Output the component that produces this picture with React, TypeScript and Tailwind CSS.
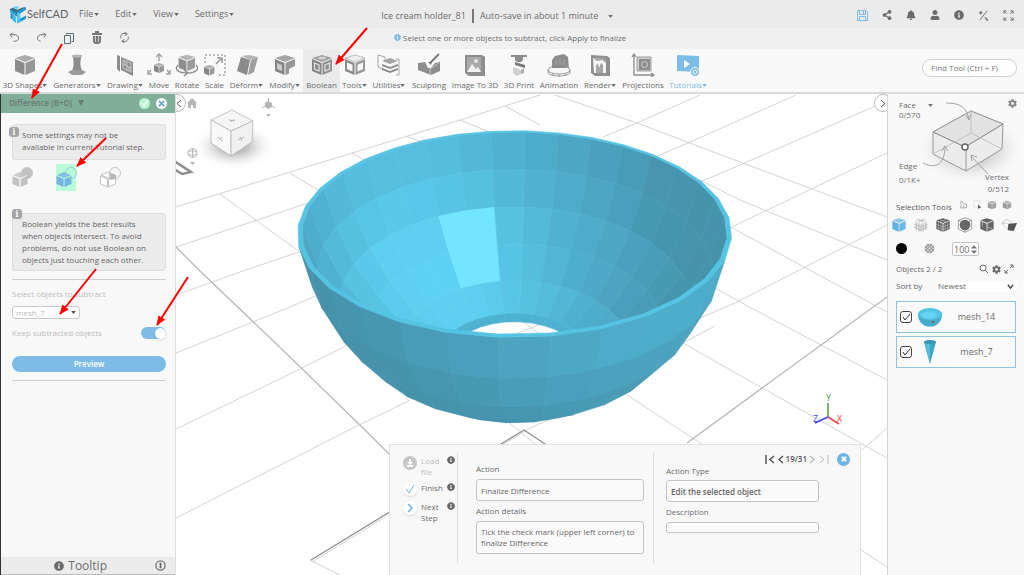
import type { ReactNode } from "react";
import { FaBell, FaCog, FaInfoCircle, FaShareAlt, FaUser } from "react-icons/fa";

type IconProps = { className?: string };

/* ---------- small shared pieces ---------- */

function Caret({ className = "" }: IconProps) {
  return (
    <svg viewBox="0 0 6 4" className={`w-[5px] h-[3px] shrink-0 ${className}`} fill="currentColor" aria-hidden="true">
      <path d="M0 0h6L3 4z" />
    </svg>
  );
}

function Svg({ children, className = "w-6 h-6", box = "0 0 24 24" }: { children: ReactNode; className?: string; box?: string }) {
  return (
    <svg viewBox={box} className={`shrink-0 ${className}`} fill="none" aria-hidden="true">
      {children}
    </svg>
  );
}

function InfoTag({ className = "" }: IconProps) {
  return (
    <span className={`flex h-[10px] w-[10px] items-center justify-center rounded-[3px] bg-[#a5a5a5] font-serif text-[9px] font-bold leading-none text-white ${className}`}>
      i
    </span>
  );
}

function Logo() {
  return (
    <Svg className="h-[19px] w-[19px]" box="0 0 36 36">
      <path d="M3 8l6-3 9 4 8-4 8-1-11 7-6 4v7l-5-3v-3z" fill="#37718c" />
      <path d="M3 8l12 7v6L5 15z" fill="#29a9e1" />
      <path d="M5 15l4 3v10l-4-3z" fill="#1d86b8" />
      <path d="M9 18l6 4v12l-6-4z" fill="#36c0ee" />
      <path d="M17 14l17-10v5l-11 7v10l11-6v6L17 35z" fill="#1896d3" />
      <path d="M17 14l6 2v13l-6 6z" fill="#4acbf6" />
      <path d="M14 2l8 2-6 4-7-3z" fill="#6fcdf0" />
    </Svg>
  );
}

/* ---------- toolbar icons ---------- */

const cubeTop = "M12 2l10 3-10 4L2 5z";
const cubeLeft = "M2 6l9.500 4v12L2 18z";
const cubeRight = "M12.500 10L22 6v12l-9.500 4z";

function CubeIcon({ className = "w-6 h-6" }: IconProps) {
  return (
    <Svg className={className}>
      <path d={cubeTop} fill="currentColor" opacity="0.7" />
      <path d={cubeLeft} fill="currentColor" />
      <path d={cubeRight} fill="currentColor" opacity="0.9" />
    </Svg>
  );
}

const toolIcons: Record<string, ReactNode> = {
  shapes: <CubeIcon className="h-6 w-6 text-[#8b8b8b]" />,
  generators: (
    <Svg>
      <path d="M7 2h10l-1 3c-1 5-1 8 1 13H7c2-5 2-8 1-13z" fill="#8d8d8d" />
      <ellipse cx="12" cy="3" rx="5" ry="1.500" fill="#b9b9b9" />
      <path d="M3 19l4-2h10l4 2-4 3H7z" fill="#9c9c9c" />
    </Svg>
  ),
  drawing: (
    <Svg>
      <path d="M4 2l3 1v16l-3-3zM8 4l12 5v14L8 17z" fill="#8d8d8d" />
      <path d="M10 7l8 3v9l-8-4zM10 11l8 4M14 9v9M12 8v4M16 14v4" stroke="#d5d5d5" strokeWidth="0.800" />
    </Svg>
  ),
  move: (
    <Svg>
      <g transform="translate(6 9) scale(.5)">
        <path d={cubeTop} fill="#b0b0b0" />
        <path d={cubeLeft} fill="#858585" />
        <path d={cubeRight} fill="#989898" />
      </g>
      <path d="M12 8V2M9 4l3-3 3 3M4 17l-3 4M1 17v4h4M20 17l3 4M23 17v4h-4" stroke="#a5a5a5" strokeWidth="1.500" />
    </Svg>
  ),
  rotate: (
    <Svg>
      <g transform="translate(2 0) scale(.82)">
        <path d={cubeTop} fill="#b5b5b5" />
        <path d={cubeLeft} fill="#8d8d8d" />
        <path d={cubeRight} fill="#9c9c9c" />
      </g>
      <path d="M3 12c-5 5 2 8 9 8 9 0 13-4 9-8M9 17l4 3-4 3" stroke="#8d8d8d" strokeWidth="1.300" />
    </Svg>
  ),
  scale: (
    <Svg>
      <path d="M2 10V2h20v20h-8" stroke="#a5a5a5" strokeWidth="1.500" strokeDasharray="2 2" />
      <g transform="translate(0 11) scale(.52)">
        <path d={cubeTop} fill="#b0b0b0" />
        <path d={cubeLeft} fill="#858585" />
        <path d={cubeRight} fill="#999" />
      </g>
      <path d="M13 11l5-5M14 5h5v5" stroke="#999" strokeWidth="1.500" />
    </Svg>
  ),
  deform: (
    <Svg>
      <path d="M7 3l7-1 9 2-8 3z" fill="#b5b5b5" />
      <path d="M6 4l9 3-3 15-10-4z" fill="#8b8b8b" />
      <path d="M16 7l7-3-4 15-6 3z" fill="#9e9e9e" />
    </Svg>
  ),
  modify: (
    <Svg>
      <path d={cubeTop} fill="#a5a5a5" />
      <path d={cubeLeft} fill="#858585" />
      <path d={cubeRight} fill="#979797" />
      <path d="M4 10l5 2v6l-5-2z" fill="#c9c9c9" />
      <path d="M16 16l6-3v6l-6 3z" fill="#f9f9f9" />
    </Svg>
  ),
  boolean: (
    <Svg>
      <path d={cubeTop} fill="#a0a0a0" />
      <path d={cubeLeft} fill="#858585" />
      <path d={cubeRight} fill="#909090" />
      <ellipse cx="12" cy="5" rx="4" ry="1.300" fill="#d5d5d5" />
      <path d="M4.500 10l4.500 2v6l-4.500-2zM15 12l4.500-2v6L15 18z" stroke="#dedede" strokeWidth="1.300" />
    </Svg>
  ),
  tools: (
    <Svg>
      <path d={cubeTop} fill="#efefef" stroke="#bdbdbd" />
      <path d={cubeLeft} fill="#8b8b8b" />
      <path d={cubeRight} fill="#999" />
      <path d="M4 9.500l5.500 2.300v6.700L4 16zM14.500 11.800L20 9.500V16l-5.500 2.500z" fill="#fafafa" />
    </Svg>
  ),
  utilities: (
    <Svg>
      <path d="M1 2l7 2v3M1 2v12l5 2M19 6h3v16h-3" stroke="#a5a5a5" />
      <path d="M13 5l8 3-8 3-8-3z" fill="#a5a5a5" />
      <path d="M5 11l8 3 8-3v2l-8 3-8-3zM5 15l8 3 8-3v2l-8 3-8-3z" fill="#8b8b8b" />
    </Svg>
  ),
  sculpting: (
    <Svg>
      <path d="M1 10l7-1 3 6h3l4-5 5-1v9l-9 4-13-5z" fill="#8d8d8d" />
      <path d="M11 9l3 3 1-3z" fill="#777" />
      <path d="M13 10L22 1" stroke="#777" strokeWidth="1.800" />
      <path d="M13 22v-6l9-6" stroke="#cfcfcf" strokeWidth="0.800" />
    </Svg>
  ),
  image: (
    <Svg>
      <path d="M2 2h17l3 2v19H6l-4-3z" fill="#8d8d8d" />
      <path d="M4 4h14v15H4z" fill="#aaa" />
      <path d="M4 19l5-8 4 5 2-2 3 5z" fill="#f2f2f2" />
      <circle cx="13" cy="8" r="2" fill="#e5e5e5" />
    </Svg>
  ),
  print: (
    <Svg>
      <path d="M4 2h16v2H4zM8 4h8v3l-2 2h-4L8 7z" fill="#8d8d8d" />
      <path d="M8 9l10 3v3L8 12z" fill="#777" />
      <path d="M6 14l8 3v4l-4 2-4-3z" fill="#d0d0d0" />
      <path d="M14 17l3-2v5l-3 1z" fill="#b0b0b0" />
    </Svg>
  ),
  animation: (
    <Svg>
      <path d="M5 16V7l3-4 9-2 4 3 1 12z" fill="#8d8d8d" />
      <path d="M9 13V7M13 14V6M17 13V7" stroke="#aaa" />
      <ellipse cx="12" cy="17" rx="11" ry="4" fill="#f7f7f7" stroke="#999" />
      <path d="M5 15h14v-3H5z" fill="#8d8d8d" />
      <path d="M1 17v3c3 4 19 4 22 0v-3M6 20v3M12 21v3M18 20v3" stroke="#999" />
    </Svg>
  ),
  render: (
    <Svg>
      <path d="M3 2l16 1 3 2v18H7l-4-3z" fill="#909090" />
      <path d="M5 5l13 1v14H6z" fill="#f4f4f4" />
      <path d="M8 20v-8l2-1 1 4 2-5 2 2v8M5 5l4 3 5-1 4 3V6z" fill="#a5a5a5" />
    </Svg>
  ),
  projections: (
    <Svg>
      <path d="M3 2v20h19M1 4l2-3 2 3M20 20l3 2-3 2" stroke="#8d8d8d" strokeWidth="1.300" />
      <path d="M6 4h14v14H6z" fill="#cfcfcf" stroke="#9c9c9c" />
      <path d="M8 6h11v11H8z" fill="#8d8d8d" />
      <circle cx="13.500" cy="11.500" r="3" stroke="#d5d5d5" />
    </Svg>
  ),
  tutorials: (
    <Svg>
      <path d="M1 2l22 1v16l-22-1z" fill="#7dbce6" />
      <path d="M8 7l6 4-6 4z" fill="#fff" />
      <circle cx="19" cy="19" r="4.500" fill="#7dbce6" stroke="#f9f9f9" />
      <circle cx="19" cy="19" r="2" stroke="#f9f9f9" />
    </Svg>
  ),
};

const tools = [
  { label: "3D Shapes", icon: "shapes", width: "w-[50px]", menu: true },
  { label: "Generators", icon: "generators", width: "w-[54px]", menu: true },
  { label: "Drawing", icon: "drawing", width: "w-[42px]", menu: true },
  { label: "Move", icon: "move", width: "w-[26px]" },
  { label: "Rotate", icon: "rotate", width: "w-[30px]" },
  { label: "Scale", icon: "scale", width: "w-[25px]" },
  { label: "Deform", icon: "deform", width: "w-[39px]", menu: true },
  { label: "Modify", icon: "modify", width: "w-[37px]", menu: true },
  { label: "Boolean", icon: "boolean", width: "w-[37px] bg-[#ebebeb]" },
  { label: "Tools", icon: "tools", width: "w-[29px]", menu: true },
  { label: "Utilities", icon: "utilities", width: "w-[40px]", menu: true },
  { label: "Sculpting", icon: "sculpting", width: "w-[40px]" },
  { label: "Image To 3D", icon: "image", width: "w-[52px]" },
  { label: "3D Print", icon: "print", width: "w-[36px]" },
  { label: "Animation", icon: "animation", width: "w-[44px]" },
  { label: "Render", icon: "render", width: "w-[38px]", menu: true },
  { label: "Projections", icon: "projections", width: "w-[48px]" },
  { label: "Tutorials", icon: "tutorials", width: "w-[42px] text-[#7dbce6]", menu: true },
];

/* ---------- header ---------- */

function MenuBar() {
  return (
    <header className="flex h-7 shrink-0 items-center bg-[#ebebeb] pl-2 pr-[10px] text-[9px]">
      <a href="#home" className="flex w-[71px] items-center text-[11px] text-[#5f6468]">
        <Logo />
        <span className="font-['Lato',sans-serif]">SelfCAD</span>
      </a>
      <nav className="flex gap-4">
        {["File", "Edit", "View", "Settings"].map((item) => (
          <button key={item} type="button" className="flex items-center gap-px">
            {item}
            <Caret />
          </button>
        ))}
      </nav>
      <div className="ml-[147px] flex items-center pt-1">
        <span>Ice cream holder_81</span>
        <span className="mx-[6px] h-[14px] w-[2px] bg-[#777]" />
        <button type="button" className="flex items-center gap-[10px]">
          Auto-save in about 1 minute
          <Caret />
        </button>
      </div>
      <div className="ml-auto flex items-center gap-[14px] pt-[2px] text-[10px]">
        <button type="button" aria-label="Save" className="text-[#7dbce6]">
          <Svg className="h-[11px] w-[11px]" box="0 0 11 11">
            <path d="M0.500 0.500h9l1 1v9h-10zM2.500 0.500v4h6v-4M2.500 10.500v-4h6v4" stroke="currentColor" />
            <path d="M6 1h1v3H6z" fill="currentColor" />
          </Svg>
        </button>
        <button type="button" aria-label="Share"><FaShareAlt /></button>
        <button type="button" aria-label="Notifications"><FaBell /></button>
        <button type="button" aria-label="Account"><FaUser /></button>
        <button type="button" aria-label="Info"><FaInfoCircle /></button>
        <button type="button" aria-label="Units">
          <Svg className="h-[11px] w-[11px]" box="0 0 12 12">
            <path d="M2 11l8-10M1 3h4M3 1v4" stroke="currentColor" />
            <circle cx="3" cy="3" r="1" fill="currentColor" />
            <path d="M7 8l4 3M9 8v3h2" stroke="currentColor" />
          </Svg>
        </button>
        <button type="button" aria-label="Full screen">
          <Svg className="h-[11px] w-[11px]" box="0 0 12 12">
            <path d="M1 4V1h3M8 1h3v3M11 8v3H8M4 11H1V8M1 1l3 3M11 1L8 4M11 11L8 8M1 11l3-3" stroke="currentColor" />
          </Svg>
        </button>
      </div>
    </header>
  );
}

function ActionBar() {
  return (
    <div className="flex h-[21px] shrink-0 items-center bg-[#f0f0f0] pl-[9px] pb-[2px] text-[8px]">
      <div className="flex w-[385px] items-center gap-4">
        <button type="button" aria-label="Undo">
          <Svg className="h-[11px] w-[11px]" box="0 0 12 12"><path d="M4 1L1 3l3 3M2 3h5c5 1 4 7 0 7H5" stroke="currentColor" /></Svg>
        </button>
        <button type="button" aria-label="Redo">
          <Svg className="h-[11px] w-[11px]" box="0 0 12 12"><path d="M8 1l3 2-3 3M10 3H5C0 4 1 10 5 10" stroke="currentColor" /></Svg>
        </button>
        <button type="button" aria-label="Copy">
          <Svg className="h-3 w-3" box="0 0 12 12"><path d="M3.500 2.500v-1h7v8h-2M1.500 3.500h6v8h-6z" stroke="#5a6c76" /></Svg>
        </button>
        <button type="button" aria-label="Delete">
          <Svg className="h-[13px] w-3" box="0 0 12 13">
            <path d="M1 2h10v2H1zM4 0h4v2H4zM2 5h8v6l-2 2H4l-2-2z" fill="#777" />
            <path d="M4.500 5v6M7.500 5v6" stroke="#ccc" />
          </Svg>
        </button>
        <button type="button" aria-label="Reset">
          <Svg className="h-[11px] w-[11px]" box="0 0 12 12"><path d="M8 2C4 0 1 4 2 7M4 10c4 2 7-2 6-5M6 0l3 2-3 2M6 12l-3-2 3-2" stroke="currentColor" /></Svg>
        </button>
      </div>
      <p className="flex items-center gap-[2px]">
        <FaInfoCircle className="text-[7px] text-[#7dbce6]" />
        Select one or more objects to subtract, click Apply to finalize
      </p>
    </div>
  );
}

function Toolbar() {
  return (
    <div className="flex h-[45px] shrink-0 items-center border-b-2 border-[#dadada] bg-[#f9f9f9]">
      <div className="flex h-full">
        {tools.map((tool) => (
          <button key={tool.label} type="button" className={`flex shrink-0 flex-col items-center pt-1 text-[8px] ${tool.width}`}>
            {toolIcons[tool.icon]}
            <span className="flex items-center whitespace-nowrap leading-4">
              {tool.label}
              {tool.menu && <Caret />}
            </span>
          </button>
        ))}
      </div>
      <input
        type="search"
        aria-label="Find Tool"
        placeholder="Find Tool (Ctrl + F)"
        className="ml-auto mr-[7px] mt-[-6px] h-[18px] w-[95px] rounded-full border border-[#cfcfcf] bg-white px-2 text-[8px] outline-none placeholder:text-[#777]"
      />
    </div>
  );
}

/* ---------- left panel ---------- */

function BooleanIcon({ mode }: { mode: "union" | "difference" | "intersection" }) {
  const tone = mode === "difference" ? "#74b4e6" : "#c2c2c2";
  const hollow = mode === "intersection";
  return (
    <Svg className="h-[21px] w-[21px]" box="0 0 21 21">
      {mode === "union" && <circle cx="15" cy="6" r="5.500" fill="#c2c2c2" />}
      <path d="M1 8l7-3 7 3-7 3z" fill={hollow ? "#f8f8f8" : tone} stroke={hollow ? tone : "none"} opacity="0.85" />
      <path d="M0.500 9l7 3v8l-7-3z" fill={hollow ? "#fff" : tone} stroke={hollow ? tone : "none"} />
      <path d="M8.500 12l7-3v8l-7 3z" fill={hollow ? "#fff" : tone} stroke={hollow ? tone : "none"} />
      {hollow && <path d="M9 6l7 2v4l-6 1z" fill="#b5b5b5" />}
      <circle cx="15" cy="6" r="5.500" stroke={mode === "difference" ? "#93cbd0" : "#c2c2c2"} />
      {mode === "union" && <path d="M0.500 8.500l7.500 3 7-3M8 12v8" stroke="#f2f2f2" />}
    </Svg>
  );
}

function LeftPanel() {
  return (
    <aside className="flex w-[176px] shrink-0 flex-col border-l border-r border-l-[#333] border-r-[#ddd] bg-[#f8f8f8] text-[8px]">
      <div className="flex h-[19px] items-center bg-[#80ae98] pb-px pl-2 pr-2 text-[#6a7c73]">
        <button type="button" className="flex items-center gap-[6px] font-semibold">
          Difference (B+D)
          <svg viewBox="0 0 6 6" className="h-[6px] w-[6px]" fill="currentColor" aria-hidden="true"><path d="M0 0h6L3 6z" /></svg>
        </button>
        <button type="button" aria-label="Apply" className="ml-auto flex h-[11px] w-[11px] items-center justify-center rounded-full bg-[#b4f5cf]">
          <Svg className="h-2 w-2" box="0 0 8 8"><path d="M1 4l2 3 4-6" stroke="#fff" strokeWidth="1.500" /></Svg>
        </button>
        <button type="button" aria-label="Cancel" className="ml-[6px] flex h-[11px] w-[11px] items-center justify-center rounded-full bg-white">
          <Svg className="h-[7px] w-[7px]" box="0 0 8 8"><path d="M1 1l6 6M7 1L1 7" stroke="#6aa9d8" strokeWidth="2" /></Svg>
        </button>
      </div>

      <div className="flex flex-col px-[11px] pr-[9px]">
        <div className="relative mt-[11px] rounded-[3px] border border-[#dedede] bg-[#ebebeb] pb-[6px] pt-1 pl-[9px] text-[#666] leading-3">
          <InfoTag className="absolute -left-1 top-[2px]" />
          Some settings may not be
          <br />
          available in current Tutorial step.
        </div>

        <div className="mt-1 flex h-[27px] gap-6">
          <button type="button" aria-label="Union" className="flex w-5 items-center"><BooleanIcon mode="union" /></button>
          <button type="button" aria-label="Difference" className="flex w-5 items-center bg-[#b9fcd8]"><BooleanIcon mode="difference" /></button>
          <button type="button" aria-label="Intersection" className="flex w-5 items-center"><BooleanIcon mode="intersection" /></button>
        </div>

        <div className="relative mt-[22px] rounded-[3px] border border-[#dedede] bg-[#ebebeb] py-1 pl-[9px] text-[#666] leading-3">
          <InfoTag className="absolute -top-[5px] -left-px" />
          Boolean yields the best results
          <br />
          when objects intersect. To avoid
          <br />
          problems, do not use Boolean on
          <br />
          objects just touching each other.
        </div>

        <hr className="mt-2 border-[#cfcfcf]" />
        <label htmlFor="subtract" className="mt-2 leading-3 text-[#bdbdbd]">Select objects to subtract</label>
        <div className="relative mt-[6px] w-[68px]">
          <select id="subtract" className="block h-[13px] w-full appearance-none rounded-[3px] border border-[#c9c9c9] bg-white pl-[3px] text-[8px] leading-none text-[#bdbdbd]">
            <option>mesh_7</option>
          </select>
          <Caret className="pointer-events-none absolute right-1 top-[5px] text-[#444]" />
        </div>
        <label className="mt-2 flex items-center text-[#bdbdbd]">
          Keep subtracted objects
          <input type="checkbox" role="switch" defaultChecked className="peer sr-only" />
          <span className="ml-auto flex h-3 w-[25px] items-center justify-end rounded-full bg-[#7dbce6]">
            <span className="h-[11px] w-[11px] rounded-full bg-white shadow-sm" />
          </span>
        </label>
        <button type="button" className="mt-[17px] h-4 rounded-full bg-[#7dbce6] text-[8px] font-semibold leading-none text-white">Preview</button>
        <hr className="mt-2 border-[#cfcfcf]" />
      </div>

      <div className="mt-auto flex h-[18px] items-center justify-end border-b border-[#bbb] bg-[#ececec] pr-[9px] text-[12px]">
        <span className="mr-12 flex items-center gap-1"><FaInfoCircle className="text-[10px]" />Tooltip</span>
        <button type="button" aria-label="Collapse tooltip">
          <Svg className="h-[11px] w-[11px]" box="0 0 12 12">
            <circle cx="6" cy="6" r="5" stroke="#777" strokeWidth="1.500" />
            <path d="M6 3v6" stroke="#666" strokeWidth="2" />
          </Svg>
        </button>
      </div>
    </aside>
  );
}

/* ---------- 3D scene ---------- */

type Ring = { r: number; h: number };

const inner: Ring[] = [
  { r: 0.985, h: 0 },
  { r: 0.94, h: 0.215 },
  { r: 0.86, h: 0.42 },
  { r: 0.74, h: 0.6 },
  { r: 0.6, h: 0.765 },
  { r: 0.42, h: 0.87 },
  { r: 0.37, h: 0.89 },
];

const outer: Ring[] = [
  { r: 1.005, h: 0 },
  { r: 0.97, h: 0.22 },
  { r: 0.89, h: 0.43 },
  { r: 0.78, h: 0.6 },
  { r: 0.62, h: 0.75 },
  { r: 0.4, h: 0.85 },
];

const SEGMENTS = 32;
const SIN = 0.465;
const COS = 0.885;

const angle = (i: number) => ((3.5 + (i * 360) / SEGMENTS) * Math.PI) / 180;

function project(ring: Ring, a: number): [number, number] {
  const x = ring.r * Math.sin(a);
  const z = ring.r * Math.cos(a);
  const depth = 4.1 + z * COS + ring.h * SIN;
  return [514.5 + (865 * x) / depth, 211.7 + (865 * (ring.h * COS - z * SIN)) / depth];
}

const ramp: [number, number, number, number][] = [
  [-1, 66, 140, 164],
  [0, 70, 148, 173],
  [0.35, 75, 162, 190],
  [0.65, 80, 177, 209],
  [0.85, 88, 196, 229],
  [1, 96, 215, 250],
];

function shade(v: number) {
  const t = Math.max(-1, Math.min(1, v));
  const i = Math.max(1, ramp.findIndex((stop) => stop[0] >= t));
  const [a, b] = [ramp[i - 1], ramp[i]];
  const k = (t - a[0]) / (b[0] - a[0]);
  const mix = (n: 1 | 2 | 3) => Math.round(a[n] + (b[n] - a[n]) * k);
  return `rgb(${mix(1)},${mix(2)},${mix(3)})`;
}

function wall(rings: Ring[], inside: boolean) {
  const faces: { points: string; fill: string }[] = [];
  for (let band = 0; band < rings.length - 1; band++) {
    const [top, low] = [rings[band], rings[band + 1]];
    const len = Math.hypot(top.r - low.r, low.h - top.h);
    const side = (low.h - top.h) / len;
    const up = (top.r - low.r) / len;
    for (let i = 0; i < SEGMENTS; i++) {
      const pts = [project(top, angle(i)), project(top, angle(i + 1)), project(low, angle(i + 1)), project(low, angle(i))];
      const area = pts.reduce((sum, p, n) => {
        const q = pts[(n + 1) % 4];
        return sum + p[0] * q[1] - q[0] * p[1];
      }, 0);
      if (inside ? area <= 0 : area >= 0) continue;
      const mid = angle(i + 0.5);
      const facing = side * (-0.45 * Math.sin(mid) + 0.5 * Math.cos(mid)) + up * 0.7;
      let fill = shade(inside ? facing : -facing);
      // the two facets that catch the light
      if (inside && (band === 2 || band === 3) && (i === SEGMENTS - 2 || i === SEGMENTS - 3)) fill = "#72e5ff";
      if (inside && band < 2 && i >= 4 && i < 9) fill = shade(facing * 0.5);
      if (inside && band === 5) fill = "#4db2d2";
      faces.push({ points: pts.map((p) => p.map((n) => n.toFixed(1)).join(",")).join(" "), fill });
    }
  }
  return faces;
}

const loop = (ring: Ring) =>
  "M" + Array.from({ length: SEGMENTS }, (_, i) => project(ring, angle(i)).map((n) => n.toFixed(1)).join(" ")).join("L") + "Z";

const gridLines = [
  "M176 207L460 120L540 95",
  "M176 247L290 209L460 150",
  "M176 295L240 272L305 250",
  "M176 353L290 307L320 294",
  "M176 429L290 374L352 343",
  "M176 518L349 430L410 400",
  "M555 95L637 123L740 162L887 217",
  "M505 106L540 125M700 180L740 200L887 260",
  "M460 120L487 131M725 224L887 312",
  "M405 136L420 141M715 288L740 302L887 380",
  "M352 153L366 161M683 343L748 380L887 458",
  "M290 173L318 190M627 395L700 443L887 567",
  "M220 194L304 255",
  "M603 137L637 123L700 95",
  "M655 157L688 143L796 95",
  "M700 182L740 165L887 101",
  "M727 230L740 223L887 153",
  "M700 318L737 302L887 225",
  "M683 343L715 326",
  "M862 450L887 428M310 560L340 575",
  "M500 415L536 445M560 415L530 428L312 562M500 340L552 320M510 312L545 338",
];

function Scene() {
  return (
    <svg viewBox="176 94 711 481" preserveAspectRatio="xMidYMid slice" className="h-full w-full" fill="none" role="img" aria-label="Bowl on the work plane">
      <defs>
        <radialGradient id="haze">
          <stop offset="0.3" stopColor="#bdbdbd" />
          <stop offset="1" stopColor="#ffffff" stopOpacity="0" />
        </radialGradient>
      </defs>
      <g stroke="#d3d3d3">
        {gridLines.map((d) => <path key={d} d={d} />)}
      </g>
      <path d="M176 247L200 271L290 357L365 430L392 457M887 297L773 380L687 443" stroke="#b9b9b9" strokeWidth="1.300" />
      <path d="M311 560L524 430L548 446" stroke="#8f8f8f" strokeWidth="1.300" />
      <path d="M174 161l17 11-9 2-8-5" stroke="#8d8d8d" strokeWidth="2.500" />

      {wall(inner, true).map((f) => <polygon key={f.points} points={f.points} fill={f.fill} stroke={f.fill} strokeWidth="0.6" />)}
      {wall(outer, false).map((f) => <polygon key={f.points} points={f.points} fill={f.fill} stroke={f.fill} strokeWidth="0.6" />)}
      <path d={`${loop(outer[0])}${loop(inner[0])}`} fill="#55c3e2" fillRule="evenodd" stroke="#55c3e2" strokeWidth="0.6" />

      <ellipse cx="234" cy="146" rx="42" ry="24" fill="url(#haze)" />
      <g stroke="#b5b5b5" strokeWidth="0.800">
        <path d="M232 110l21 11-22 10-20-11z" fill="#f5f5f5" />
        <path d="M211 120l20 11v25l-20-13z" fill="#f9f9f9" />
        <path d="M253 121l-22 10v25l21-14z" fill="#f1f1f1" />
      </g>
      <path d="M229 120l6 1M231 122l3-3M217 137l6 4M219 139l3-2M238 140l6-3M240 137l2 4" stroke="#b5b5b5" />

      <g fill="#b5b5b5">
        <path d="M192 98l5 5h-1v5h-3v-3h-2v3h-3v-5h-1z" />
        <path d="M190 162h5l-2.500 3zM266 114h5l-2.500 3z" />
        <path d="M265 103l3-2 4 2v4l-4 2-3-2z" />
      </g>
      <g stroke="#b5b5b5">
        <circle cx="192.500" cy="153" r="4.500" />
        <path d="M188 151h9M188 155h9M192.500 148v9M268.500 102v-4M265 106l-3 2M272 106l3 2" />
      </g>

      <g strokeWidth="1.500">
        <path d="M828 417V403" stroke="#4c9f45" />
        <path d="M828 417l11 7" stroke="#ef4444" />
        <path d="M828 417l-13 6" stroke="#4444dd" />
      </g>
      <g className="text-[9px]">
        <text x="826" y="401" fill="#4c9f45">Y</text>
        <text x="837" y="422" fill="#ef4444">X</text>
        <text x="813" y="422" fill="#4444dd">Z</text>
      </g>
    </svg>
  );
}

/* ---------- tutorial steps ---------- */

const fieldClass = "block w-full rounded-[3px] border border-[#c4c4c4] bg-[#fafafa] px-1 text-[8px] text-[#666] outline-none";

function StepsPanel() {
  return (
    <section className="absolute bottom-0 right-[26px] flex h-[131px] w-[472px] border border-b-0 border-[#e2e2e2] bg-[#f8f8f8] pt-2 text-[8px]">
      <div className="flex h-[110px] w-[68px] shrink-0 flex-col gap-[3px] border-r border-[#dcdcdc] pl-[13px] pt-[2px] leading-[11px]">
        <button type="button" className="flex h-6 items-start text-left text-[#c0c0c0]">
          <span className="mt-px flex h-[14px] w-[14px] shrink-0 items-center justify-center rounded-full bg-[#c6c6c6]">
            <Svg className="h-2 w-2" box="0 0 8 8"><path d="M3 0h2v3h2L4 6 1 3h2zM1 6h6v2H1z" fill="#fff" /></Svg>
          </span>
          <span className="w-[30px] shrink-0 pl-1">Load<br />file</span>
          <FaInfoCircle className="mt-px shrink-0 text-[#666]" />
        </button>
        <button type="button" className="flex h-4 items-start text-left">
          <span className="flex h-[14px] w-[14px] shrink-0 items-center justify-center rounded-full bg-white shadow-sm">
            <Svg className="h-[10px] w-[10px]" box="0 0 10 10"><path d="M1 5l3 4 5-8" stroke="#6bb3e6" /></Svg>
          </span>
          <span className="w-[30px] shrink-0 pl-1">Finish</span>
          <FaInfoCircle className="mt-px shrink-0 text-[#666]" />
        </button>
        <button type="button" className="flex items-start text-left">
          <span className="flex h-[14px] w-[14px] shrink-0 items-center justify-center rounded-full bg-white shadow-sm">
            <Svg className="h-[10px] w-[10px]" box="0 0 10 10"><path d="M3 1l4 4-4 4" stroke="#6bb3e6" strokeWidth="1.500" /></Svg>
          </span>
          <span className="w-[30px] shrink-0 pl-1">Next<br />Step</span>
          <FaInfoCircle className="mt-px shrink-0 text-[#666]" />
        </button>
      </div>

      <div className="flex h-[110px] w-[196px] flex-col border-r border-[#dcdcdc] pl-[18px] pr-[9px]">
        <label htmlFor="action" className="pt-[10px] leading-3">Action</label>
        <input id="action" defaultValue="Finalize Difference" className={`mt-1 h-[22px] ${fieldClass}`} />
        <label htmlFor="details" className="pt-1 leading-3">Action details</label>
        <textarea
          id="details"
          defaultValue="Tick the check mark (upper left corner) to finalize Difference"
          className={`mt-1 h-[33px] resize-none overflow-hidden pt-1 leading-[11px] ${fieldClass}`}
        />
      </div>

      <div className="flex w-[196px] flex-col pl-3">
        <div className="flex h-3 items-center justify-end text-[#555]">
          <button type="button" aria-label="First step"><Svg className="h-[9px] w-[10px]" box="0 0 10 9"><path d="M1 0v9M9 1L5 4.500 9 8" stroke="#555" strokeWidth="1.500" /></Svg></button>
          <button type="button" aria-label="Previous step" className="ml-[3px]"><Svg className="h-[9px] w-[6px]" box="0 0 6 9"><path d="M5 1L1 4.500 5 8" stroke="#555" strokeWidth="1.500" /></Svg></button>
          <span className="mx-[2px] font-semibold leading-3">19/31</span>
          <button type="button" aria-label="Next step"><Svg className="h-[9px] w-[6px]" box="0 0 6 9"><path d="M1 1l4 3.500L1 8" stroke="#bbb" strokeWidth="1.500" /></Svg></button>
          <button type="button" aria-label="Last step" className="ml-1"><Svg className="h-[9px] w-[10px]" box="0 0 10 9"><path d="M9 0v9M1 1l4 3.500L1 8" stroke="#bbb" /></Svg></button>
          <button type="button" aria-label="Close" className="ml-2 flex h-[13px] w-[13px] items-center justify-center rounded-full bg-[#6bb3e6]">
            <Svg className="h-[6px] w-[6px]" box="0 0 8 8"><path d="M1 1l6 6M7 1L1 7" stroke="#fff" strokeWidth="2.500" /></Svg>
          </button>
        </div>
        <div className="w-[153px]">
          <label htmlFor="type" className="block leading-[11px]">Action Type</label>
          <input id="type" defaultValue="Edit the selected object" className={`mt-1 h-[22px] font-semibold ${fieldClass}`} />
          <label htmlFor="description" className="block pt-1 leading-3">Description</label>
          <input id="description" className={`mt-1 h-[11px] ${fieldClass}`} />
        </div>
      </div>
    </section>
  );
}

/* ---------- right panel ---------- */

function SelectionCube() {
  return (
    <div className="relative h-[104px] leading-[10px]">
      <svg viewBox="888 96 136 104" className="h-full w-full" fill="none" stroke="#999" aria-hidden="true">
        <defs>
          <radialGradient id="shadow">
            <stop offset="0.3" stopColor="#c2c2c2" />
            <stop offset="1" stopColor="#f9f9f9" stopOpacity="0" />
          </radialGradient>
        </defs>
        <ellipse cx="970" cy="149" rx="56" ry="36" fill="url(#shadow)" stroke="none" />
        <path d="M933 132l38-21 32 13-1 25-36 22-33-17z" fill="#ececec" />
        <path d="M933 132l38-21 32 13-38 23z" fill="#e2e2e2" />
        <path d="M933 132l32 15 38-23M966 147v24" />
        <path d="M971 111v22l-38 21M971 133l31 16" stroke="#c2c2c2" />
        <circle cx="965" cy="147" r="3" fill="#fff" stroke="#666" strokeWidth="1.500" />
        <path d="M946 103c14 0 21 4 23 17M966 115l3 5 2-6M923 163c14 7 22 0 22-17M942 151l3-5 3 5M988 174l-17-18M972 161l-1-6 6 2" stroke="#a5a5a5" />
      </svg>
      <button type="button" className="absolute left-[11px] top-1 text-left">
        Face<br />0/570
      </button>
      <Caret className="absolute left-10 top-2" />
      <span className="absolute left-[11px] top-[65px]">Edge</span>
      <span className="absolute left-[11px] top-[79px]">0/1K+</span>
      <span className="absolute right-[15px] top-[76px]">Vertex</span>
      <span className="absolute right-[15px] top-[88px]">0/512</span>
      <button type="button" aria-label="Settings" className="absolute right-[7px] top-[3px] text-[9px] text-[#888]"><FaCog /></button>
    </div>
  );
}

function GridCube({ tone, line }: { tone: string; line: string }) {
  return (
    <Svg className="h-4 w-4">
      <path d={`${cubeTop}${cubeLeft}${cubeRight}`} fill={tone} />
      <path d="M12 10v12M2 11l10 4 10-4M2 15l10 4 10-4M5 7v13M9 9v13M15 9v13M19 7v13M6 3l10 4M18 3L8 7" stroke={line} />
    </Svg>
  );
}

function MeshCard({ name, children }: { name: string; children: ReactNode }) {
  return (
    <label className="flex h-8 items-center border border-[#8fc3e6] bg-[#fafafa] pl-[3px]">
      <span className="relative h-3 w-3">
        <input type="checkbox" defaultChecked className="peer block h-3 w-3 appearance-none rounded-[3px] border border-[#444] bg-white" />
        <svg viewBox="0 0 12 12" className="pointer-events-none absolute inset-0 hidden peer-checked:block" fill="none" stroke="#333" aria-hidden="true">
          <path d="M3 6l2 3 5-6" />
        </svg>
      </span>
      <span className="ml-[6px] w-6">{children}</span>
      <span className="flex-1 pr-1 text-center text-[9px]">{name}</span>
    </label>
  );
}

function RightPanel() {
  return (
    <aside className="flex w-[137px] shrink-0 flex-col border-l border-[#d5d5d5] bg-[#f9f9f9] pt-[2px] text-[8px]">
      <SelectionCube />
      <div className="flex h-4 items-start pl-2 pr-3 text-[#999]">
        <span className="mr-auto pt-px text-[#555]">Selection Tools</span>
        <div className="flex gap-[5px]">
          <Svg className="h-[9px] w-[9px]"><path d="M5 12V3l9 8h6v10H3l4-9M12 21v-7" stroke="currentColor" strokeWidth="2" /></Svg>
          <Svg className="h-[9px] w-[9px]"><path d="M2 2h16v10M2 2v16h10" stroke="#ccc" strokeWidth="2" strokeDasharray="3 2" /><path d="M13 12l9 8-5 1-3 3z" fill="#555" /></Svg>
          <CubeIcon className="h-[10px] w-[10px]" />
          <CubeIcon className="h-[10px] w-[10px]" />
        </div>
      </div>
      <div className="mt-px flex justify-between pl-[3px] pr-[7px] pb-1">
        <button type="button" aria-label="Solid" className="text-[#5eb2e4]"><CubeIcon className="h-4 w-4" /></button>
        <button type="button" aria-label="Wireframe"><GridCube tone="#eee" line="#aaa" /></button>
        <button type="button" aria-label="Solid and wireframe"><GridCube tone="#555" line="#bbb" /></button>
        <button type="button" aria-label="Outline">
          <Svg className="h-4 w-4"><path d="M12 1l10 4v13l-10 5-10-5V5zM2 5l10 4 10-4M12 9v14" stroke="#777" /><circle cx="12" cy="12" r="8" fill="#666" /></Svg>
        </button>
        <button type="button" aria-label="See through">
          <Svg className="h-4 w-4"><path d={`${cubeTop}${cubeLeft}${cubeRight}`} fill="#666" /><path d="M12 9L5 6.500v8M12 9v6l8 3" stroke="#ccc" /></Svg>
        </button>
        <button type="button" aria-label="Plane">
          <Svg className="h-4 w-4"><path d="M11 10l13-1-5 12-9-1z" fill="#555" /><path d="M10 10L1 9l8-6 8 6M1 9l9 9" stroke="#bbb" /></Svg>
        </button>
      </div>

      <div className="mt-1 flex h-[14px] items-center pl-2">
        <button type="button" aria-label="Color" className="h-[11px] w-[11px] rounded-full bg-black" />
        <button type="button" aria-label="Material" className="ml-[17px]">
          <Svg className="h-[11px] w-[11px]" box="0 0 11 11">
            <circle cx="5.500" cy="5.500" r="5" fill="#c9c9c9" />
            <path d="M1 3l7 7M3 1l7 7M1 6l4 4M6 1l4 4M3 10l7-7M1 8l7-7M1 5l4-4M6 10l4-4" stroke="#8d8d8d" strokeWidth="0.700" />
          </Svg>
        </button>
        <div className="mt-[2px] ml-[17px] flex h-[14px] w-[27px] items-center rounded-[2px] border border-[#c4c4c4] bg-white">
          <input type="text" aria-label="Opacity" defaultValue="100" className="h-full w-[18px] pl-px text-[9px] outline-none" />
          <Svg className="h-[9px] w-[6px]" box="0 0 6 9"><path d="M0 3.500L3 0l3 3.500zM0 5.500h6L3 9z" fill="#777" /></Svg>
        </div>
      </div>

      <div className="mt-[6px] flex h-4 items-center pl-2 pr-[10px]">
        <span className="mr-auto">Objects 2 / 2</span>
        <div className="flex items-center gap-[3px] text-[9px]">
          <button type="button" aria-label="Search"><Svg className="h-[10px] w-[10px]" box="0 0 10 10"><circle cx="4" cy="4" r="3" stroke="currentColor" /><path d="M6 6l3 3" stroke="currentColor" /></Svg></button>
          <button type="button" aria-label="Object settings"><FaCog /></button>
          <button type="button" aria-label="Expand"><Svg className="h-[10px] w-[10px]" box="0 0 10 10"><path d="M6 1h3v3M9 1L6 4M4 9H1V6M1 9l3-3" stroke="currentColor" /></Svg></button>
        </div>
      </div>
      <div className="relative flex items-center pl-2 pr-[7px] pt-[3px]">
        <label htmlFor="sort" className="w-10 text-[#666]">Sort by</label>
        <select id="sort" className="h-[11px] flex-1 appearance-none bg-white pl-[2px] text-[8px] leading-none text-[#666]">
          <option>Newest</option>
        </select>
        <Svg className="pointer-events-none absolute right-[10px] h-[7px] w-[7px]" box="0 0 8 8"><path d="M1 2l3 4 3-4" stroke="#444" strokeWidth="1.500" /></Svg>
      </div>

      <div className="mt-[9px] flex flex-col gap-[3px] px-2">
        <MeshCard name="mesh_14">
          <Svg className="h-[20px] w-6" box="0 0 24 20">
            <path d="M0 7c0 17 24 17 24 0z" fill="#44acca" />
            <ellipse cx="12" cy="7" rx="12" ry="6" fill="#52c4e4" />
            <ellipse cx="11" cy="8" rx="8" ry="3.500" fill="#64d3f4" />
            <circle cx="15" cy="15" r="1" fill="#a33" />
          </Svg>
        </MeshCard>
        <MeshCard name="mesh_7">
          <Svg className="h-[26px] w-6" box="0 0 24 26">
            <path d="M6 3h12l-6 22z" fill="#3fa5c4" />
            <path d="M6 3h6v22z" fill="#53bddb" />
            <ellipse cx="12" cy="3" rx="6" ry="2" fill="#3795b3" />
          </Svg>
        </MeshCard>
      </div>
    </aside>
  );
}

/* ---------- callout arrows ---------- */

const arrows = [
  [62, 44, 32, 98],
  [367, 28, 336, 64],
  [106, 138, 77, 166],
  [96, 269, 60, 314],
  [188, 277, 157, 325],
];

function Callouts() {
  return (
    <svg viewBox="0 0 400 400" className="pointer-events-none absolute left-0 top-0 h-[400px] w-[400px]" aria-hidden="true">
      <defs>
        <marker id="head" viewBox="0 0 10 8" refX="9" refY="4" markerWidth="10" markerHeight="8" markerUnits="userSpaceOnUse" orient="auto">
          <path d="M0 0l10 4-10 4z" fill="red" />
        </marker>
      </defs>
      {arrows.map(([x1, y1, x2, y2]) => (
        <line key={x1} x1={x1} y1={y1} x2={x2} y2={y2} stroke="red" strokeWidth="2" markerEnd="url(#head)" />
      ))}
    </svg>
  );
}

export default function App() {
  return (
    <div className="relative flex h-screen flex-col overflow-hidden bg-white font-['Open_Sans','Noto_Sans',sans-serif] text-[#6b6b6b]">
      <MenuBar />
      <ActionBar />
      <Toolbar />
      <div className="flex min-h-0 flex-1">
        <LeftPanel />
        <main className="relative min-w-0 flex-1 overflow-hidden">
          <div className="absolute inset-0"><Scene /></div>
          <button type="button" aria-label="Hide settings" className="absolute -left-2 top-0 flex h-[18px] w-[18px] items-center justify-end rounded-full border border-[#bbb] bg-white pr-[3px]">
            <Svg className="h-[9px] w-[6px]" box="0 0 6 9"><path d="M5 1L1 4.500 5 8" stroke="#555" /></Svg>
          </button>
          <button type="button" aria-label="Hide objects" className="absolute -right-[5px] top-0 flex h-[18px] w-[18px] items-center rounded-full border border-[#bbb] bg-white pl-[5px]">
            <Svg className="h-[9px] w-[6px]" box="0 0 6 9"><path d="M1 1l4 3.500L1 8" stroke="#555" /></Svg>
          </button>
          <StepsPanel />
        </main>
        <RightPanel />
      </div>
      <Callouts />
    </div>
  );
}
